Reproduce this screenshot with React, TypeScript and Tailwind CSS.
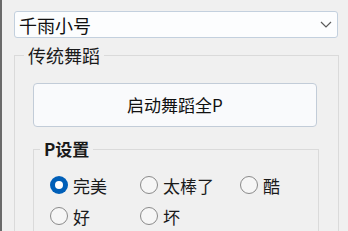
import { type ReactNode } from "react";

const FONT = { fontFamily: '"Noto Sans CJK SC", "Noto Sans", sans-serif' };

// ─── Radio ───────────────────────────────────────────────────────────────────

function Radio({ label, checked = false, className = "" }: { label: string; checked?: boolean; className?: string }) {
  return (
    <label className={`flex items-center gap-[5px] ${className}`}>
      {checked ? (
        <span className="flex size-[18px] items-center justify-center rounded-full bg-[#005fb8]">
          <span className="size-[8px] rounded-full bg-white" />
        </span>
      ) : (
        <span className="size-[18px] rounded-full border border-[#8a8a8a] bg-[#f6f6f6]" />
      )}
      <span className="text-[17px] leading-none text-[#1a1a1a]">{label}</span>
    </label>
  );
}

// ─── Group Box ───────────────────────────────────────────────────────────────

function GroupBox({
  title,
  bold,
  className,
  legendClass,
  children,
}: {
  title: string;
  bold?: boolean;
  className: string;
  legendClass: string;
  children: ReactNode;
}) {
  return (
    <fieldset className={`border border-[#dadada] ${className}`}>
      <legend className={`px-[4px] leading-[18px] text-[#1a1a1a] ${legendClass} ${bold ? "font-bold" : ""}`}>
        {title}
      </legend>
      {children}
    </fieldset>
  );
}

export default function App() {
  return (
    <div className="h-[231px] w-[348px] overflow-hidden border-l-2 border-[#6a6a6a] bg-[#f0f0f0] pl-[12px] pr-[10px] pt-[11px]" style={FONT}>
      {/* Combo box */}
      <div className="flex h-[27px] w-[324px] items-center justify-between rounded-[3px] border border-[#c3d0de] bg-[#fcfdfe] pl-[4px] pr-[5px]">
        <span className="text-[18px] leading-none text-[#111]">千雨小号</span>
        <svg width="12" height="7" viewBox="0 0 12 7" fill="none" stroke="#5a5a5a" strokeWidth="1.2">
          <path d="M1 1l5 5 5-5" />
        </svg>
      </div>

      {/* 传统舞蹈 */}
      <GroupBox title="传统舞蹈" legendClass="-ml-[9px] text-[18px]" className="mt-[8px] w-[323px] pb-[40px] pl-[18px] pr-[19px]">
        <button className="mt-[19px] flex h-[44px] w-[284px] items-center justify-center rounded-[4px] border border-[#c2ccd8] bg-[#f9fafc] text-[17px] text-[#111]">
          启动舞蹈全P
        </button>

        <GroupBox title="P设置" bold legendClass="-ml-[10px] text-[17px]" className="mt-[13px] w-[286px] pb-[30px] pl-[16px]">
          <div className="mt-[18px] flex flex-col gap-[13px]">
            <div className="flex">
              <Radio label="完美" checked className="w-[90px]" />
              <Radio label="太棒了" className="w-[100px]" />
              <Radio label="酷" />
            </div>
            <div className="flex">
              <Radio label="好" className="w-[90px]" />
              <Radio label="坏" />
            </div>
          </div>
        </GroupBox>
      </GroupBox>
    </div>
  );
}
